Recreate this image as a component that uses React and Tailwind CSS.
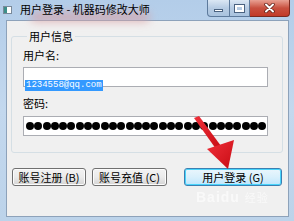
import React from 'react';

const font = { fontFamily: '"Noto Sans CJK SC", "Noto Sans", sans-serif' };

const Dots = ({ count = 30 }) => (
  <div className="flex items-center gap-[0.3px] ml-[2px] overflow-hidden">
    {[...Array(count)].map((_, i) => (
      <div key={i} className="w-[8px] h-[8px] shrink-0 rounded-full bg-black"></div>
    ))}
  </div>
);

const WinButton = ({ children, className = '' }) => (
  <button
    className={`h-[18px] rounded-[3px] border border-[#707070] bg-gradient-to-b from-[#f2f2f2] via-[#ebebeb] to-[#d4d4d4] text-[11px] leading-[14px] text-black shadow-[inset_0_0_0_1px_#fcfcfc] flex items-center justify-center ${className}`}
  >
    {children}
  </button>
);

export default function App() {
  return (
    <div
      className="w-[294px] h-[221px] relative overflow-hidden flex flex-col bg-gradient-to-b from-[#b3cde9] via-[#c3d8ee] to-[#bcd3ea]"
      style={font}
    >
      {/* aero pink glow behind title */}
      <div className="absolute left-[30px] top-[12px] w-[120px] h-[10px] rounded-full bg-[#d9a0a4] opacity-70 blur-[4px]"></div>

      {/* title bar */}
      <div className="h-[20px] flex items-start relative">
        <div className="ml-[3px] mt-[6px] w-[9px] h-[8px] bg-white border border-[#7a8a9a] flex">
          <div className="w-[3px] h-full bg-[#3d8f8a]"></div>
        </div>
        <div className="ml-[8px] mt-[2px] text-[11px] leading-[15px] text-black">
          用户登录 - 机器码修改大师
        </div>
        <div className="ml-auto mr-[4px] flex h-[17px]">
          <div className="w-[23px] h-full rounded-bl-[4px] border border-[#5d7a9c] border-t-0 bg-gradient-to-b from-[#dbe7f4] via-[#b6cbe3] to-[#a9c3df] flex items-end justify-center pb-[4px]">
            <div className="w-[9px] h-[3px] bg-white border border-[#4a6280]"></div>
          </div>
          <div className="w-[20px] h-full border-b border-r border-[#5d7a9c] bg-gradient-to-b from-[#dbe7f4] via-[#b6cbe3] to-[#a9c3df] flex items-center justify-center">
            <div className="w-[9px] h-[7px] border-2 border-white outline outline-1 outline-[#4a6280]"></div>
          </div>
          <div className="w-[40px] h-full rounded-br-[4px] border border-[#7a2a20] border-t-0 border-l-0 bg-gradient-to-b from-[#e8a093] via-[#c8503f] to-[#c23a28] flex items-center justify-center">
            <svg width="11" height="10" viewBox="0 0 11 10">
              <path d="M2 1.5 L9 8.5 M9 1.5 L2 8.5" stroke="#5a1a12" strokeWidth="3.4" strokeLinecap="round" />
              <path d="M2 1.5 L9 8.5 M9 1.5 L2 8.5" stroke="#ffffff" strokeWidth="2" strokeLinecap="round" />
            </svg>
          </div>
        </div>
      </div>

      {/* client area */}
      <div className="flex-1 ml-[6px] mr-[5px] mb-[4px] bg-[#f0f0f0] border border-[#8da2ba] flex flex-col">
        <fieldset className="mt-[8px] ml-[4px] mr-[5px] border border-[#d5dfe5] rounded-[3px] pl-[11px] pr-[14px] pb-[16px]">
          <legend className="ml-[4px] px-[2px] text-[11px] leading-[14px] text-black">用户信息</legend>
          <div className="mt-[5px] text-[11px] leading-[14px] text-black">用户名:</div>
          <div className="mt-[5px] h-[20px] w-[245px] bg-white border border-[#abadb3] pl-[1px]">
            <span
              className="inline-block h-[11px] px-[1px] bg-[#3399ff] text-white text-[9px] leading-[11px]"
              style={{ fontFamily: '"Liberation Mono", monospace' }}
            >
              1234558@qq.com
            </span>
          </div>
          <div className="mt-[9px] text-[11px] leading-[14px] text-black">密码:</div>
          <div className="mt-[6px] h-[20px] w-[245px] bg-white border border-[#abadb3] flex items-center">
            <Dots count={30} />
          </div>
        </fieldset>

        <div className="mt-[15px] ml-[5px] flex">
          <WinButton className="w-[74px]">账号注册 (B)</WinButton>
          <WinButton className="w-[75px] ml-[6px]">账号充值 (C)</WinButton>
          <button className="ml-[17px] w-[98px] h-[18px] rounded-[3px] border border-[#3c7fb1] bg-gradient-to-b from-[#eaf6fd] via-[#d9f0fc] to-[#bee6fd] shadow-[inset_0_0_0_1px_#48d4fb] text-[11px] leading-[14px] text-black flex items-center justify-center">
            用户登录 (G)
          </button>
        </div>
      </div>

      {/* baidu watermark */}
      <div className="absolute left-[196px] top-[189px] text-[14px] leading-[16px] font-bold text-white opacity-60 tracking-[1px]" style={{ fontFamily: '"Liberation Sans", sans-serif' }}>
        Baidu <span className="text-[11px] font-normal" style={font}>经验</span>
      </div>

      {/* red arrow overlay */}
      <svg className="absolute left-0 top-0 pointer-events-none" width="294" height="221" viewBox="0 0 294 221">
        <defs>
          <linearGradient id="ar" x1="0" y1="0" x2="1" y2="1">
            <stop offset="0" stopColor="#f0303a" />
            <stop offset="1" stopColor="#c80c14" />
          </linearGradient>
        </defs>
        <polygon points="194,118 199,116 221,146 216,149" fill="url(#ar)" />
        <polygon points="207,149 234,140 228,169" fill="url(#ar)" />
      </svg>
    </div>
  );
}
